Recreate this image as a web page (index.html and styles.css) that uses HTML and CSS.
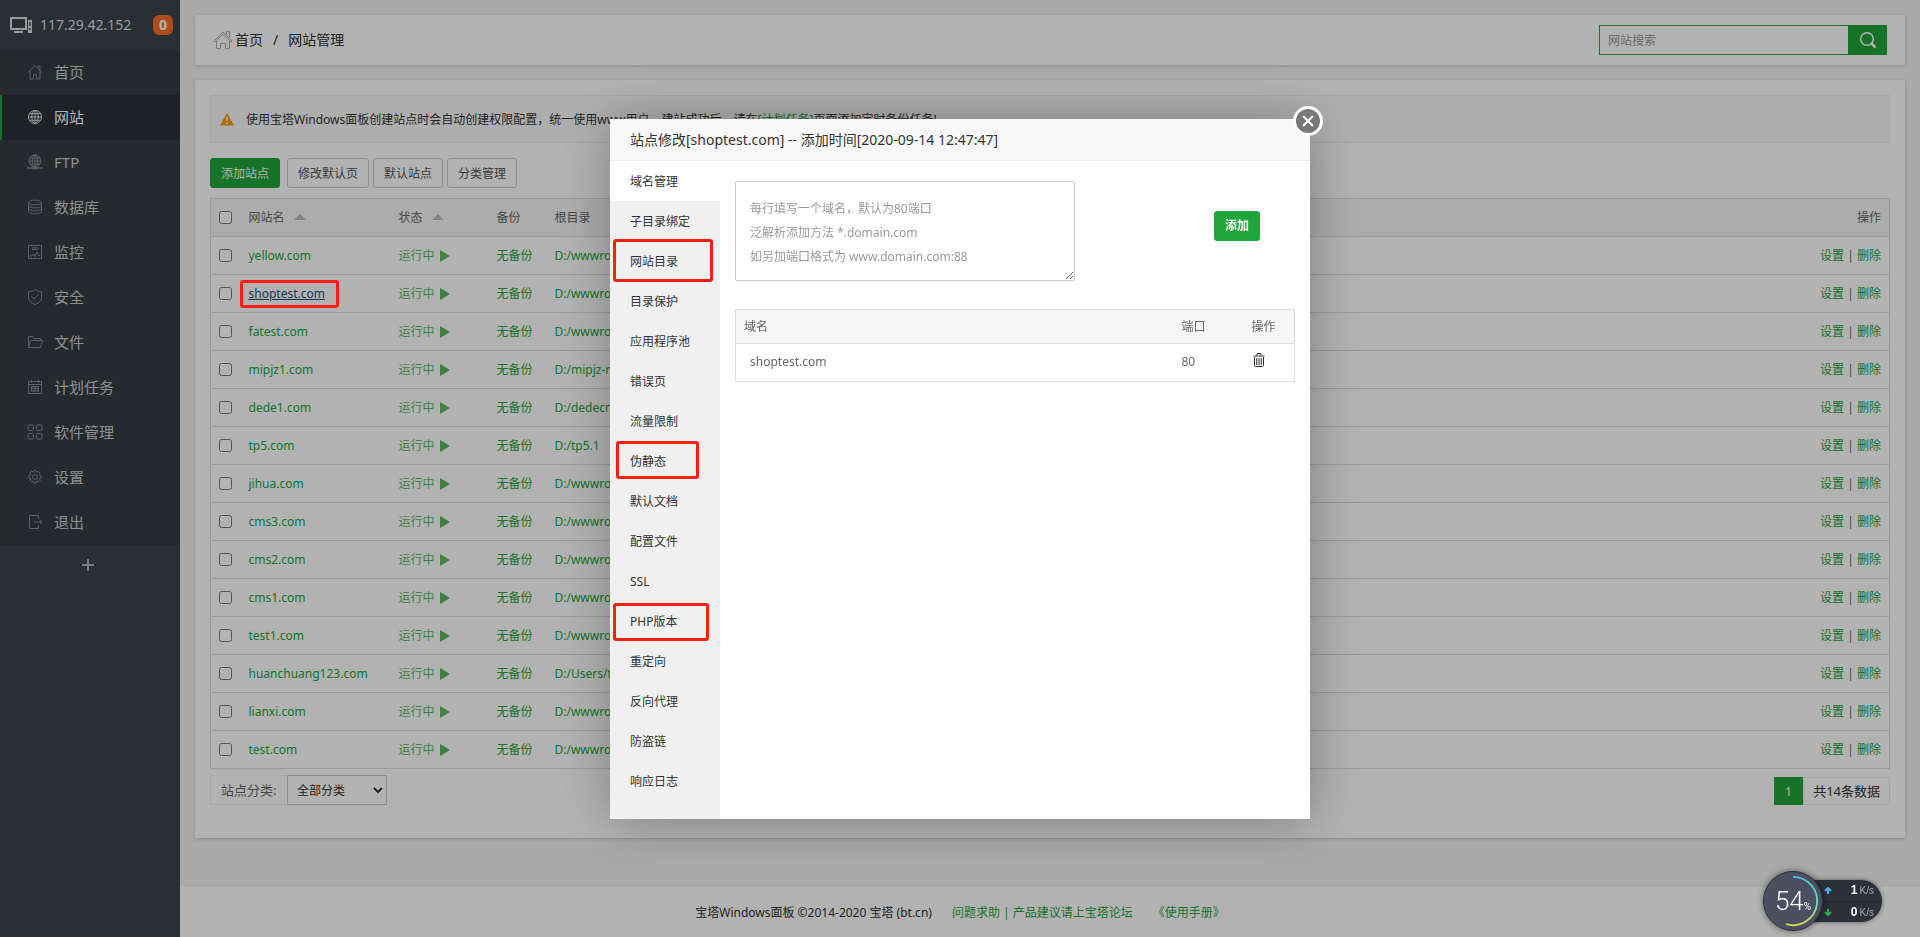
FILE: index.html
```html
<!DOCTYPE html>
<html lang="zh-CN">
<head>
<meta charset="utf-8">
<title>网站管理 - 宝塔Windows面板</title>
<link rel="stylesheet" href="styles.css">
</head>
<body>
<div class="layout">
  <aside class="sidebar">
    <div class="server">
      <svg class="server-icon" width="24" height="18" viewBox="0 0 24 18" fill="none" stroke="currentColor"><path d="M2 2h15v11H2z" stroke-width="2"/><path d="M5 16h9" stroke-width="2"/><path d="M21 4v13" stroke-width="4"/><path d="M21 6v4M21 12v2" stroke="#3c444d" stroke-width="1.500"/></svg>
      <span class="server-ip">117.29.42.152</span>
      <span class="badge">0</span>
    </div>
    <nav>
      <ul class="menu">
        <li><a href="#home"><svg class="mi" viewBox="0 0 16 16"><path d="M1 8.500 8 1.500l7 7M3 7v8h3.500v-4.500h3V15H13V7M11 4V2h2v4"/></svg>首页</a></li>
        <li class="active"><a href="#site"><svg class="mi" viewBox="0 0 16 16"><circle cx="8" cy="8" r="6.500"/><ellipse cx="8" cy="8" rx="3.200" ry="6.500"/><path d="M1.500 8h13M8 1.500v13M2.500 4.700h11M2.500 11.300h11"/></svg>网站</a></li>
        <li><a href="#ftp"><svg class="mi" viewBox="0 0 16 16"><circle cx="8" cy="7" r="6"/><ellipse cx="8" cy="7" rx="2.800" ry="6"/><path d="M2 7h12M8 1v13M3 4h10M3 10h10"/><path d="M0 14h16M6 14.500h4" stroke-width="1.500"/></svg>FTP</a></li>
        <li><a href="#database"><svg class="mi" viewBox="0 0 16 16"><ellipse cx="8" cy="3.500" rx="6.500" ry="2.300"/><path d="M1.500 3.500v9c0 3 13 3 13 0v-9M1.500 6.500c0 3 13 3 13 0M1.500 9.500c0 3 13 3 13 0"/></svg>数据库</a></li>
        <li><a href="#monitor"><svg class="mi" viewBox="0 0 16 16"><path d="M1.500 1.500h13v13h-13zM5 4h6M5 5.500h6M3 12h2l1.500-2L8 12.500 10 8l1.500 3.500H13"/></svg>监控</a></li>
        <li><a href="#security"><svg class="mi" viewBox="0 0 16 16"><path d="M8 .800c2 1.400 4 1.700 6.500 1.700v6c0 3-2.500 5.500-6.500 7-4-1.500-6.500-4-6.500-7v-6C4 2.500 6 2.200 8 .800zM4.800 7.500l2.400 2.600 4.200-4.500"/></svg>安全</a></li>
        <li><a href="#files"><svg class="mi" viewBox="0 0 16 16"><path d="M1.500 13.500v-11h4l1.500 2h6.500v2M1.500 13.500l2-7h12l-2 7z"/></svg>文件</a></li>
        <li><a href="#cron"><svg class="mi" viewBox="0 0 16 16"><path d="M1.500 2.500h13v12h-13zM1.500 5.500h13M4.500 1v3M11.500 1v3M4 7.500h8M4 9.700h8M4 12h8M4.500 7v5.500M8 7v5.500M11.500 7v5.500"/></svg>计划任务</a></li>
        <li><a href="#soft"><svg class="mi" viewBox="0 0 16 16"><rect x="1" y="1" width="5.500" height="5.500" rx="1"/><rect x="9.500" y="1" width="5.500" height="5.500" rx="1"/><rect x="1" y="9.500" width="5.500" height="5.500" rx="1"/><rect x="9.500" y="9.500" width="5.500" height="5.500" rx="1"/></svg>软件管理</a></li>
        <li><a href="#config"><svg class="mi" viewBox="0 0 16 16"><circle cx="8" cy="8" r="2.500"/><path d="M6.800 1.500h2.400l.5 1.800 1.800-1 1.700 1.700-1 1.800 1.800.5v2.900l-1.800.5 1 1.800-1.700 1.700-1.800-1-.5 1.800H6.800l-.5-1.800-1.800 1-1.700-1.700 1-1.800-1.800-.5V6.300l1.800-.5-1-1.800 1.700-1.700 1.800 1z"/></svg>设置</a></li>
        <li><a href="#logout"><svg class="mi" viewBox="0 0 16 16"><path d="M11.500 4.500v-3h-9v13h9v-3M6.500 8h8.500M12.500 5.500 15 8l-2.500 2.500"/></svg>退出</a></li>
      </ul>
    </nav>
    <button class="menu-add" type="button" aria-label="添加菜单"><svg width="14" height="14" viewBox="0 0 14 14" fill="none" stroke="currentColor" stroke-width="2"><path d="M7 1v12M1 7h12"/></svg></button>
  </aside>

  <div class="main">
    <header class="panel crumbs">
      <div class="crumb-path">
        <svg width="20" height="20" viewBox="0 0 20 20" fill="none" stroke="#aaa" stroke-width="1"><path d="M1 11 10 2l9 9-1.200 1L10 4.200 2.200 12zM3.500 11v7.500h4v-5h5v5h4V11M13.500 4.500v-3h3v6"/></svg>
        <a href="#home">首页</a><span class="slash">/</span><span>网站管理</span>
      </div>
      <form class="search">
        <input type="text" placeholder="网站搜索" aria-label="网站搜索">
        <button type="button" aria-label="搜索"><svg width="18" height="18" viewBox="0 0 18 18" fill="none" stroke="#fff" stroke-width="1.500"><circle cx="8" cy="8" r="6.300"/><path d="m12.500 12.500 4 4" stroke-width="2.500"/></svg></button>
      </form>
    </header>

    <main class="panel content">
      <div class="notice">
        <svg width="14" height="13" viewBox="0 0 14 13"><path d="M7 0 14 12.500H0z" fill="#f59c0c"/><path d="M7 4v4M7 9.500V11" stroke="#fff" stroke-width="1.600"/></svg>
        <p>使用宝塔Windows面板创建站点时会自动创建权限配置，统一使用www用户。建站成功后，请在<a href="#cron">[计划任务]</a>页面添加定时备份任务!</p>
      </div>
      <div class="toolbar">
        <button class="btn btn-primary" type="button">添加站点</button>
        <button class="btn" type="button">修改默认页</button>
        <button class="btn" type="button">默认站点</button>
        <button class="btn" type="button">分类管理</button>
      </div>
      <table class="sites">
        <colgroup><col class="c-check"><col class="c-name"><col class="c-status"><col class="c-backup"><col class="c-root"><col class="c-op"></colgroup>
        <thead><tr><th><input type="checkbox" aria-label="全选"></th><th>网站名<i class="sort"></i></th><th>状态<i class="sort"></i></th><th>备份</th><th>根目录</th><th class="right">操作</th></tr></thead>
        <tbody id="site-rows"></tbody>
      </table>
      <div class="table-foot">
        <div class="category">
          <label for="category">站点分类:</label>
          <select id="category"><option>全部分类</option></select>
        </div>
        <div class="pager"><span class="page-current">1</span><span class="page-total">共14条数据</span></div>
      </div>
    </main>

    <footer class="footer">
      <span>宝塔Windows面板 ©2014-2020 宝塔 (bt.cn)</span>
      <a href="#forum">问题求助 | 产品建议请上宝塔论坛</a>
      <a href="#manual">《使用手册》</a>
    </footer>
  </div>
</div>

<div class="mask"></div>
<div class="mark mark-site"></div>

<section class="dialog" role="dialog" aria-labelledby="dialog-title">
  <h2 id="dialog-title">站点修改[shoptest.com] -- 添加时间[2020-09-14 12:47:47]</h2>
  <button class="dialog-close" type="button" aria-label="关闭"><svg width="12" height="12" viewBox="0 0 12 12" stroke="#fff" stroke-width="2"><path d="m1 1 10 10M11 1 1 11"/></svg></button>
  <div class="dialog-body">
    <ul class="tabs">
      <li class="on">域名管理</li>
      <li>子目录绑定</li>
      <li>网站目录<span class="mark mark-dir"></span></li>
      <li>目录保护</li>
      <li>应用程序池</li>
      <li>错误页</li>
      <li>流量限制</li>
      <li>伪静态<span class="mark mark-rewrite"></span></li>
      <li>默认文档</li>
      <li>配置文件</li>
      <li>SSL</li>
      <li>PHP版本<span class="mark mark-php"></span></li>
      <li>重定向</li>
      <li>反向代理</li>
      <li>防盗链</li>
      <li>响应日志</li>
    </ul>
    <div class="tab-page">
      <div class="domain-form">
        <textarea aria-label="域名" placeholder="每行填写一个域名，默认为80端口
泛解析添加方法 *.domain.com
如另加端口格式为 www.domain.com:88"></textarea>
        <button class="btn btn-primary btn-bold" type="button">添加</button>
      </div>
      <table class="domains">
        <colgroup><col><col class="d-port"><col class="d-op"></colgroup>
        <thead><tr><th>域名</th><th>端口</th><th>操作</th></tr></thead>
        <tbody><tr><td class="domain">shoptest.com</td><td>80</td><td><button class="trash" type="button" aria-label="删除"><svg width="12" height="14" viewBox="0 0 12 14" fill="none" stroke="#333"><path d="M.500 3h11M4 2.500v-2h4v2M1.500 4v8.500q0 1 1 1h7q1 0 1-1V4"/><path d="M3.500 5v7M5.200 5v7M6.900 5v7M8.600 5v7" stroke-width=".8"/></svg></button></td></tr></tbody>
      </table>
    </div>
  </div>
</section>

<div class="monitor">
  <div class="gauge">
    <svg class="gauge-ring" viewBox="0 0 60 60" fill="none"><defs><linearGradient id="ring" x1="0" y1="0" x2="0" y2="1"><stop offset="0" stop-color="#45c8dc"/><stop offset=".6" stop-color="#7fdcae"/><stop offset="1" stop-color="#e0e04a"/></linearGradient></defs><path d="M30 5a25 25 0 1 1-7 49" stroke="url(#ring)" stroke-width="1.800"/></svg>
    <span class="gauge-value">54</span><span class="gauge-unit">%</span>
  </div>
  <div class="speeds">
    <div class="speed"><svg width="8" height="8" viewBox="0 0 8 8" fill="none" stroke="#43b4f0" stroke-width="2"><path d="M4 7V1M1 4l3-3 3 3"/></svg><span><b>1</b>K/s</span></div>
    <div class="speed"><svg width="8" height="8" viewBox="0 0 8 8" fill="none" stroke="#2bb14a" stroke-width="2"><path d="M4 1v6M1 4l3 3 3-3"/></svg><span><b>0</b>K/s</span></div>
  </div>
</div>
<script src="app.js"></script>
</body>
</html>
```
FILE: styles.css
```css
* { box-sizing: border-box; }
body {
  margin: 0;
  background: #f2f2f2;
  color: #333;
  font: 12px/18px "Noto Sans", "Noto Sans CJK SC", sans-serif;
}
button, input, select, textarea { font: inherit; margin: 0; }
a { color: #20a53a; text-decoration: none; }
ul, h2, p { margin: 0; padding: 0; list-style: none; font-weight: normal; }

.layout { display: flex; min-height: 100vh; }

/* Sidebar */
.sidebar { width: 180px; flex: none; background: #3c444d; color: #fff; }
.server { display: flex; align-items: center; height: 50px; padding: 0 7px 0 9px; color: #ddd; }
.server-icon { margin-right: 7px; }
.server-ip { font-size: 14px; flex: 1; }
.badge {
  width: 20px; height: 20px; border-radius: 6px;
  background: #fc6d26; color: #fff; font-weight: bold; font-size: 14px; line-height: 20px; text-align: center;
}
.menu { background: #353d44; border-left: 2px solid #383c3e; }
.menu a { display: flex; align-items: center; gap: 11px; height: 45px; padding: 0 0 2px 25px; color: #cdcdcd; font-size: 15px; }
.menu .active { margin-left: -2px; border-left: 2px solid #20a53a; background: #2c3138; }
.menu .active a { color: #fff; }
.mi { width: 16px; height: 16px; fill: none; stroke: #888c90; stroke-width: 1; }
.active .mi { stroke: #ddd; }
.menu-add { display: flex; justify-content: center; width: 100%; padding: 13px 5px 13px 0; border: 0; background: none; color: #b0b0b0; }

/* Main area */
.main { flex: 1; min-width: 0; display: flex; flex-direction: column; }
.panel { margin: 15px 15px 0; background: #fff; box-shadow: 0 1px 3px rgba(0, 0, 0, .2); }
.crumbs { display: flex; align-items: center; justify-content: space-between; padding: 10px 18px; }
.crumb-path { display: flex; align-items: center; font-size: 14px; line-height: 20px; }
.crumb-path a { color: #333; margin-left: 2px; }
.slash { margin: 0 10px; }
.search { display: flex; height: 30px; }
.search input { width: 250px; padding: 1px 8px 0; border: 1px solid #20a53a; background: #fff; }
.search input::placeholder { color: #999; }
.search button { width: 38px; padding: 0; border: 0; background: #20a53a; display: flex; align-items: center; justify-content: center; }

.content { padding: 15px 15px 33px; }
.notice { display: flex; align-items: center; gap: 12px; height: 48px; padding: 1px 9px 0; border: 1px solid #eee; background: #fafafa; }
.toolbar { display: flex; gap: 4px; margin: 15px 0 10px; }
.btn { height: 30px; padding: 1px 10px 0; border: 1px solid #ccc; border-radius: 3px; background: #fff; color: #555; }
.btn-primary { border-color: #20a53a; background: #20a53a; color: #fff; }
.toolbar .btn-primary { margin-right: 3px; }
.btn-bold { font-weight: bold; }

table { width: 100%; border-collapse: collapse; table-layout: fixed; }
th, td { text-align: left; font-weight: normal; padding: 0 8px; border-bottom: 1px solid #ddd; white-space: nowrap; }
.sites, .domains { border: 1px solid #ddd; color: #666; }
th { background: #f6f6f6; color: #666; }
.sites tr { height: 38px; }
.sites input { display: block; }
.c-check { width: 30px; }
.c-name { width: 150px; }
.c-status { width: 98px; }
.c-backup { width: 58px; }
.c-root { width: 200px; }
.right { text-align: right; }
.sort { display: inline-block; margin: 0 0 2px 9px; vertical-align: middle; border: 6px solid transparent; border-top: 0; border-bottom-color: #bbb; }
.running { color: #5cb85c; }
.running i { display: inline-block; margin-left: 5px; vertical-align: -2px; border: 6px solid transparent; border-left: 10px solid #5cb85c; border-right: 0; }
.hovered { color: #23527c; text-decoration: underline; }

.table-foot { display: flex; justify-content: space-between; align-items: flex-end; margin-top: 6px; }
.category { display: flex; height: 30px; color: #666; }
.category label { padding: 0 10px; border: 1px solid #eee; border-right: 0; font-size: 13px; line-height: 28px; width: 77px; white-space: nowrap; }
.category select { width: 100px; padding: 0 5px; border: 1px solid #ccc; border-radius: 0; background: #fff; color: #333; }
.pager { display: flex; font-size: 13px; line-height: 26px; }
.page-current { padding: 1px 11px; background: #20a53a; color: #fff; }
.page-total { padding: 0 9px; border: 1px solid #eee; }

.footer { display: flex; justify-content: center; align-items: center; gap: 20px; height: 50px; padding: 2px 180px 0 0; margin-top: auto; background: #fff; }

/* Layers over the page */
.mask { position: fixed; inset: 0; background: rgba(0, 0, 0, .3); }
.mark { position: absolute; border: 3px solid #ff1f10; border-radius: 3px; pointer-events: none; }
.mark-site { left: 240px; top: 280px; width: 99px; height: 28px; }
.mark-dir { left: 3px; top: -2px; width: 100px; height: 43px; }
.mark-rewrite { left: 6px; top: 0; width: 83px; height: 38px; }
.mark-php { left: 3px; top: 2px; width: 96px; height: 38px; }

.dialog {
  position: fixed; left: 50%; top: 50%; margin: -350px 0 0 -350px;
  width: 700px; height: 700px; display: flex; flex-direction: column;
  background: #fff; box-shadow: 1px 1px 50px rgba(0, 0, 0, .3);
}
.dialog h2 { padding: 0 20px; border-bottom: 1px solid #eee; background: #f8f8f8; font-size: 14px; line-height: 41px; }
.dialog-close {
  position: absolute; right: -13px; top: -13px; width: 30px; height: 30px; padding: 0;
  display: flex; align-items: center; justify-content: center;
  border: 3px solid #fff; border-radius: 50%; background: #787878;
}
.dialog-body { display: flex; flex: 1; }
.tabs { width: 110px; background: #f0f0f0; }
.tabs li { position: relative; padding: 2px 0 0 20px; line-height: 38px; }
.tabs .on { background: #fff; }
.tab-page { flex: 1; padding: 20px 15px; }
.domain-form { display: flex; align-items: center; justify-content: space-between; padding-right: 35px; margin-bottom: 28px; }
.domain-form textarea { width: 340px; height: 100px; padding: 15px 14px 10px; border: 1px solid #ccc; border-radius: 2px; line-height: 24px; resize: both; }
.domain-form textarea::placeholder { color: #999; }
.domain-form .btn { margin-bottom: 10px; }
.domains th { height: 34px; padding-top: 2px; }
.domains td { height: 38px; }
.domains .domain { padding-left: 14px; }
.d-port { width: 70px; }
.d-op { width: 51px; }
.trash { display: block; margin-left: 1px; padding: 0; border: 0; background: none; }

/* Floating network monitor */
.monitor { position: fixed; right: 38px; bottom: 6px; display: flex; align-items: center; color: #fff; }
.gauge {
  position: relative; z-index: 1; width: 60px; height: 60px; border-radius: 50%;
  display: flex; align-items: baseline; justify-content: center;
  border: 1px solid #2c313c; background: #4a5060; box-shadow: 0 0 6px rgba(0, 0, 0, .5);
  font-family: Roboto, sans-serif; line-height: 58px;
}
.gauge-ring { position: absolute; inset: 0; }
.gauge-value { font-size: 26px; font-weight: 300; }
.gauge-unit { font-size: 10px; }
.speeds { width: 72px; margin-left: -13px; padding-left: 14px; border-radius: 0 21px 21px 0; background: #2b303b; box-shadow: 0 0 4px rgba(0, 0, 0, .5); }
.speed { display: flex; align-items: center; justify-content: space-between; height: 21px; padding-right: 8px; color: #a4a8b0; font: 10px/20px "Liberation Sans", sans-serif; }
.speed + .speed { border-top: 1px solid #23272f; }
.speed b { margin-right: 2px; color: #fff; font-size: 12px; }
```
FILE: app.js
```js
const sites = [
  ["yellow.com", "D:/wwwroot"], ["shoptest.com", "D:/wwwroot"], ["fatest.com", "D:/wwwroot"],
  ["mipjz1.com", "D:/mipjz-r"], ["dede1.com", "D:/dedecms"], ["tp5.com", "D:/tp5.1"],
  ["jihua.com", "D:/wwwroot"], ["cms3.com", "D:/wwwroot"], ["cms2.com", "D:/wwwroot"],
  ["cms1.com", "D:/wwwroot"], ["test1.com", "D:/wwwroot"], ["huanchuang123.com", "D:/Users/t"],
  ["lianxi.com", "D:/wwwroot"], ["test.com", "D:/wwwroot"]
];
document.getElementById("site-rows").innerHTML = sites.map(([name, root]) => `
  <tr>
    <td><input type="checkbox" aria-label="${name}"></td>
    <td><a href="#site"${name === "shoptest.com" ? ' class="hovered"' : ""}>${name}</a></td>
    <td><a href="#status" class="running">运行中<i></i></a></td>
    <td><a href="#backup">无备份</a></td>
    <td><a href="#root">${root}</a></td>
    <td class="right"><a href="#edit">设置</a> | <a href="#delete">删除</a></td>
  </tr>`).join("");
```
